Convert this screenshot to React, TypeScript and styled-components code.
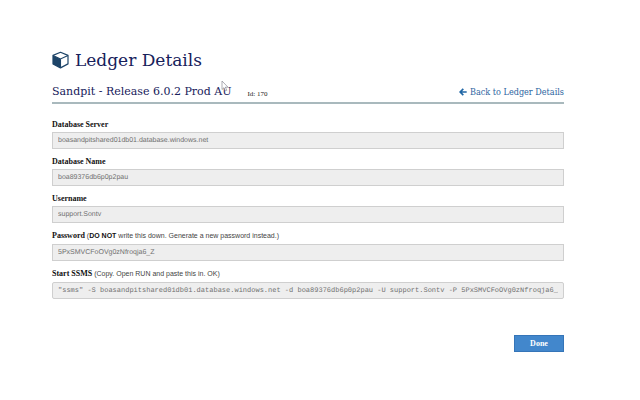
import React from "react";
import styled, { createGlobalStyle } from "styled-components";

const slab = '"DejaVu Serif", "Liberation Serif", serif';
const slabNarrow = '"DejaVu Serif Condensed", "DejaVu Serif", serif';
const sans = '"Liberation Sans", Arial, sans-serif';
const mono = '"Liberation Mono", "Courier New", monospace';

const GlobalStyle = createGlobalStyle`
  * { box-sizing: border-box; }
  body { margin: 0; background: #fff; color: #333; font-family: ${sans}; font-size: 7px; }
`;

const Page = styled.main`
  padding: 48px 76px 48px 52px;
`;

const Title = styled.h1`
  display: flex;
  align-items: center;
  gap: 6px;
  margin: 0;
  font: 400 17px/24px ${slab};
  color: #17215b;
  white-space: nowrap;
`;

const SubHeader = styled.header`
  display: flex;
  align-items: center;
  margin-top: 10px;
  height: 22px;
  border-bottom: 2px solid #a9b9bd;
  white-space: nowrap;
`;

const LedgerName = styled.h2`
  position: relative;
  margin: 0;
  font: 400 11px/20px ${slab};
  color: #17215b;
`;

const Pointer = styled.svg`
  position: absolute;
  right: 2px;
  top: -2px;
`;

const LedgerId = styled.span`
  margin: 4px 0 0 16px;
  font: 400 7px/16px "Liberation Serif", serif;
  color: #222;
`;

const BackLink = styled.a`
  display: flex;
  align-items: center;
  gap: 3px;
  margin-left: auto;
  font: 400 9px/20px ${slabNarrow};
  color: #2c64a0;
  text-decoration: none;
`;

const Form = styled.form`
  display: flex;
  flex-direction: column;
  padding-top: 14px;
`;

const Label = styled.label<{ $hinted?: boolean }>`
  height: ${(p) => (p.$hinted ? 15 : 14)}px;
  font: 400 7px/14px ${sans};
  color: #444;
  white-space: nowrap;
`;

const LabelName = styled.span`
  font: 700 8px/14px "Liberation Serif", serif;
  color: #111;
`;

const Strong = styled.strong`
  color: #111;
`;

const Field = styled.input<{ $code?: boolean }>`
  width: 100%;
  height: 17px;
  margin-bottom: 6px;
  padding: 0 5px;
  border: 1px solid #cfcfcf;
  border-radius: ${(p) => (p.$code ? 2 : 0)}px;
  outline: 0;
  background: #eee;
  color: #707070;
  font-family: ${(p) => (p.$code ? mono : sans)};
  font-size: 7px;
  line-height: 15px;
  text-rendering: geometricPrecision;
`;

const Done = styled.button`
  align-self: flex-end;
  width: 50px;
  height: 17px;
  margin-top: 30px;
  padding: 0;
  border: 1px solid #3575b8;
  background: #4287cc;
  color: #fff;
  font: 700 8px/15px "Liberation Serif", serif;
`;

const fields = [
  { id: "server", label: "Database Server", value: "boasandpitshared01db01.database.windows.net" },
  { id: "database", label: "Database Name", value: "boa89376db6p0p2pau" },
  { id: "username", label: "Username", value: "support.Sontv" },
  {
    id: "password",
    label: "Password",
    hint: <> (<Strong>DO NOT</Strong> write this down. Generate a new password instead.)</>,
    value: "5PxSMVCFoOVg0zNfroqja6_Z",
  },
  {
    id: "ssms",
    label: "Start SSMS",
    hint: <> (Copy. Open RUN and paste this in. OK)</>,
    value:
      '"ssms" -S boasandpitshared01db01.database.windows.net -d boa89376db6p0p2pau -U support.Sontv -P 5PxSMVCFoOVg0zNfroqja6_Z',
    code: true,
  },
];

export default function App() {
  return (
    <Page>
      <GlobalStyle />
      <Title>
        <svg width="17" height="18" viewBox="0 0 17 18" aria-hidden="true">
          <path d="M8.5 1.3 16 4.4v8.5l-7.5 4-7.5-4V4.4z" fill="#fff" stroke="#1d4468" strokeWidth="1.2" strokeLinejoin="round" />
          <path d="M1 4.4 8.5 8v8.9L1 12.9z" fill="#1d4468" />
          <path d="M1 4.4 8.5 8 16 4.4M8.5 8v8.9" fill="none" stroke="#1d4468" strokeWidth="1.1" />
        </svg>
        Ledger Details
      </Title>
      <SubHeader>
        <LedgerName>
          Sandpit - Release 6.0.2 Prod AU
          <Pointer width="8" height="12" viewBox="0 0 8 12" aria-hidden="true">
            <path d="M1 1v8.5l2-1.8 1.4 3.2 1.4-.6-1.4-3.1H7z" fill="#fff" stroke="#8a8a94" strokeWidth=".7" />
          </Pointer>
        </LedgerName>
        <LedgerId>Id: 170</LedgerId>
        <BackLink href="#ledger">
          <svg width="8" height="8" viewBox="0 0 8 8" aria-hidden="true">
            <path d="M4.3.8 1.1 4l3.2 3.2M1.3 4h6.4" fill="none" stroke="#1f66a5" strokeWidth="1.7" />
          </svg>
          Back to Ledger Details
        </BackLink>
      </SubHeader>
      <Form onSubmit={(e) => e.preventDefault()}>
        {fields.map((f) => (
          <React.Fragment key={f.id}>
            <Label htmlFor={f.id} $hinted={!!f.hint}>
              <LabelName>{f.label}</LabelName>
              {f.hint}
            </Label>
            <Field id={f.id} readOnly value={f.value} $code={f.code} />
          </React.Fragment>
        ))}
        <Done type="submit">Done</Done>
      </Form>
    </Page>
  );
}
